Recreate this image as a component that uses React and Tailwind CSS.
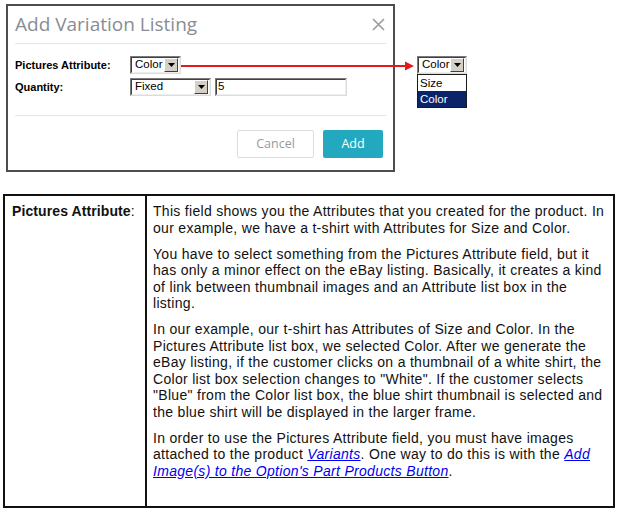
import React from "react";

function Arrow() {
    return (
        <span className="flex w-[14px] h-[14px] items-center justify-center bg-[#d4d0c8] border border-t-white border-l-white border-r-[#404040] border-b-[#404040]">
            <svg width="7" height="4" viewBox="0 0 7 4">
                <polygon points="0,0 7,0 3.5,4" fill="#000" />
            </svg>
        </span>
    );
}

function ClassicSelect({ value, width }) {
    return (
        <div
            className={`flex items-center h-[18px] bg-white border border-t-[#7a7a7a] border-l-[#7a7a7a] border-r-[#dcdcdc] border-b-[#dcdcdc] ${width}`}
        >
            <div className="flex flex-1 items-center h-full border border-t-[#404040] border-l-[#404040] border-r-[#eeeeee] border-b-[#eeeeee] pl-[3px] pr-[1px]">
                <span className="flex-1 text-[11.5px] leading-none text-black">{value}</span>
                <Arrow />
            </div>
        </div>
    );
}

export default function App() {
    const sans = { fontFamily: '"Liberation Sans", Arial, sans-serif' };
    return (
        <div className="relative w-[622px] h-[512px] bg-white overflow-hidden" style={sans}>
            {/* Dialog */}
            <div className="ml-[6px] mt-[4px] w-[389px] h-[168px] border-2 border-[#4d4d4d] flex flex-col">
                <div className="flex items-start justify-between h-[37px] pl-[7px] pr-[8px]">
                    <span
                        className="mt-[6px] text-[19px] leading-[24px] text-[#878d93]"
                        style={{ fontFamily: '"Open Sans", sans-serif' }}
                    >
                        Add Variation Listing
                    </span>
                    <svg className="mt-[12px]" width="13" height="13" viewBox="0 0 13 13">
                        <path d="M1 1 L12 12 M12 1 L1 12" stroke="#9a9a9a" strokeWidth="1.6" />
                    </svg>
                </div>
                <div className="mx-[7px] h-px bg-[#e6e6e6]" />

                <div className="flex flex-col gap-[4px] pt-[12px] pb-[19px] pl-[7px]">
                    <div className="flex items-center">
                        <span className="w-[115px] text-[11px] font-bold text-black">Pictures Attribute:</span>
                        <ClassicSelect value="Color" width="w-[51px]" />
                    </div>
                    <div className="flex items-center">
                        <span className="w-[115px] text-[11px] font-bold text-black">Quantity:</span>
                        <ClassicSelect value="Fixed" width="w-[81px]" />
                        <div className="ml-[4px] w-[132px] h-[18px] border border-t-[#7a7a7a] border-l-[#7a7a7a] border-r-[#dcdcdc] border-b-[#dcdcdc]">
                            <div className="h-full border border-t-[#404040] border-l-[#404040] border-r-[#eeeeee] border-b-[#eeeeee] pl-[1px] flex items-center text-[11.5px] leading-none">
                                5
                            </div>
                        </div>
                    </div>
                </div>
                <div className="mx-[7px] h-px bg-[#e6e6e6]" />

                <div
                    className="flex justify-end gap-[9px] pt-[14px] pr-[10px]"
                    style={{ fontFamily: '"Open Sans", sans-serif' }}
                >
                    <button className="w-[77px] h-[28px] rounded-[2px] border border-[#dddddd] bg-white text-[12.5px] text-[#999999]">
                        Cancel
                    </button>
                    <button className="w-[60px] h-[28px] rounded-[2px] bg-[#22a9bf] text-[12.5px] text-white">
                        Add
                    </button>
                </div>
            </div>

            {/* Pointer to the open dropdown */}
            <svg className="absolute left-0 top-0" width="622" height="120">
                <line x1="181" y1="66" x2="406" y2="66" stroke="#e41a1a" strokeWidth="2" />
                <polygon points="405,61.5 414,66 405,70.5" fill="#e41a1a" />
            </svg>

            {/* Open dropdown */}
            <div className="absolute left-[417px] top-[56px] w-[50px]">
                <ClassicSelect value="Color" width="w-[50px]" />
                <div className="border border-[#1a1a1a] bg-white text-[11.5px] leading-[16px]">
                    <div className="pl-[2px] text-black">Size</div>
                    <div className="pl-[2px] bg-[#0a246a] text-white">Color</div>
                </div>
            </div>

            {/* Field description table */}
            <div className="ml-[3px] mt-[22px] w-[612px] h-[314px] border-2 border-[#111111] grid grid-cols-[142px_1fr] text-[14px] leading-[16.5px] tracking-[0.3px] text-[#111111]">
                <div className="border-r-2 border-[#111111] pt-[7px] pl-[7px] tracking-[0.1px]">
                    <span className="font-bold">Pictures Attribute</span>:
                </div>
                <div className="pt-[7px] pl-[6px] pr-[2px] whitespace-nowrap">
                    <p className="mb-[9.5px]">
                        This field shows you the Attributes that you created for the product. In
                        <br />
                        our example, we have a t-shirt with Attributes for Size and Color.
                    </p>
                    <p className="mb-[9.5px]">
                        You have to select something from the Pictures Attribute field, but it
                        <br />
                        has only a minor effect on the eBay listing. Basically, it creates a kind
                        <br />
                        of link between thumbnail images and an Attribute list box in the
                        <br />
                        listing.
                    </p>
                    <p className="mb-[9.5px]">
                        In our example, our t-shirt has Attributes of Size and Color. In the
                        <br />
                        Pictures Attribute list box, we selected Color. After we generate the
                        <br />
                        eBay listing, if the customer clicks on a thumbnail of a white shirt, the
                        <br />
                        Color list box selection changes to "White". If the customer selects
                        <br />
                        "Blue" from the Color list box, the blue shirt thumbnail is selected and
                        <br />
                        the blue shirt will be displayed in the larger frame.
                    </p>
                    <p>
                        In order to use the Pictures Attribute field, you must have images
                        <br />
                        attached to the product <a className="italic underline text-[#0000ee]">Variants</a>. One way to
                        do this is with the <a className="italic underline text-[#0000ee]">Add</a>
                        <br />
                        <a className="italic underline text-[#0000ee]">Image(s) to the Option's Part Products Button</a>.
                    </p>
                </div>
            </div>
        </div>
    );
}
